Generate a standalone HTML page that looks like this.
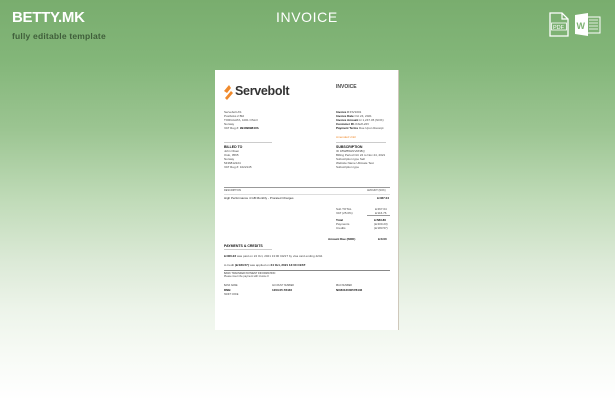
<!DOCTYPE html>
<html><head><meta charset="utf-8"><style>
*{margin:0;padding:0;box-sizing:border-box}
body{width:615px;height:400px;overflow:hidden;font-family:"Liberation Sans",sans-serif;position:relative;
background:linear-gradient(to bottom,#79ad6e 0px,#83b679 60px,#9cc592 130px,#c0dbb8 200px,#dbe9d6 260px,#edf4ea 310px,#f6faf4 350px,#fff 400px);}
.a{position:absolute}
.paper{position:absolute;left:215px;top:70px;width:184px;height:260px;background:#fff;border-right:1px solid #cfc8bb;overflow:hidden;color:#333}
.t{position:absolute;font-size:3px;line-height:4px;color:#444;white-space:nowrap}
.b{font-weight:bold;color:#111}
.ln{position:absolute;height:1px;background:#bbb}
</style></head><body>
<div class="a" style="left:12px;top:9px;font-size:15px;font-weight:900;color:#fff;letter-spacing:-0.3px">BETTY.MK</div>
<div class="a" style="left:12px;top:31px;font-size:8.5px;font-weight:bold;color:#3f5e3a;letter-spacing:0.2px">fully editable template</div>
<div class="a" style="left:276px;top:9px;font-size:14px;color:#fff;letter-spacing:0.6px">INVOICE</div>
<svg class="a" style="left:548px;top:11px" width="54" height="27" viewBox="0 0 54 27">
<path d="M2 2h12l6 6v17H2z" fill="none" stroke="#fff" stroke-width="1.3"/>
<path d="M14 2v6h6" fill="none" stroke="#fff" stroke-width="1.2"/>
<rect x="3.5" y="12" width="15" height="7" fill="none" stroke="#fff" stroke-width="0.8"/>
<text x="5" y="18" font-size="5.5" fill="#fff" font-family="Liberation Sans">PDF</text>
<rect x="30" y="6" width="22" height="16" fill="none" stroke="#fff" stroke-width="1"/>
<path d="M41 9h9M41 12h9M41 15h9M41 18h9" stroke="#fff" stroke-width="0.8"/>
<path d="M27 4l13-2v23l-13-2z" fill="#fff"/>
<text x="28.5" y="18" font-size="9" font-weight="bold" fill="#7fb374" font-family="Liberation Sans">W</text>
</svg>
<div class="paper">
<svg class="a" style="left:8px;top:15px" width="10" height="16" viewBox="0 0 10 16"><path d="M6 0L1 6l3 2 4-5zM8 6L2 13l2 2 6-7z" fill="#f08a2c"/></svg>
<div class="a" style="left:20px;top:14px;font-size:12.5px;font-weight:bold;color:#333;letter-spacing:-0.3px">Servebolt</div>
<div class="a" style="left:121px;top:14px;font-size:5px;font-weight:bold;color:#444">INVOICE</div>
<div class="t" style="left:9px;top:40px">Servebolt AS<br>Postboks 2 Bld<br>TORGGATA, 1001 OSLO<br>Norway<br>VAT Reg #: <b class="b">994098984VA</b></div>
<div class="t" style="left:121px;top:40px"><b class="b">Invoice #</b> INV1001<br><b class="b">Invoice Date</b> Oct 24, 2021<br><b class="b">Invoice Amount</b> kr 1,247.45 (NOK)<br><b class="b">Customer ID</b> cbbu8-22V<br><b class="b">Payment Terms</b> Due Upon Receipt</div>
<div class="t" style="left:121px;top:65px;color:#f08a2c">Amended Until</div>
<div class="ln" style="left:9px;top:72px;width:48px;background:#ccc"></div>
<div class="ln" style="left:121px;top:72px;width:50px;background:#ccc"></div>
<div class="t b" style="left:9px;top:75px;font-size:3.5px">BILLED TO</div>
<div class="t" style="left:9px;top:79px">John Olsen<br>Oslo, 0565<br>Norway<br>5436812224<br>VAT Reg #: 1022145</div>
<div class="t b" style="left:121px;top:75px;font-size:3.5px">SUBSCRIPTION</div>
<div class="t" style="left:121px;top:79px">ID 1BWB5HNVRN8Q<br>Billing Period Oct 24 to Nov 24, 2021<br>Subscription type Sell<br>Website Name Ultimate Test<br>Subscription type</div>
<div class="ln" style="left:9px;top:117px;width:166px;background:#999"></div>
<div class="t" style="left:9px;top:119px;font-size:2.5px">DESCRIPTION</div>
<div class="t" style="left:152px;top:119px;font-size:2.5px">AMOUNT (NOK)</div>
<div class="ln" style="left:9px;top:124px;width:166px;background:#ddd"></div>
<div class="t" style="left:9px;top:126px;color:#222">High Performance 4 GB Monthly - Prorated Charges</div>
<div class="t b" style="left:162px;top:126px">kr467.04</div>
<div class="t" style="left:121px;top:137px">Sub TOTAL<br>VAT (25.0%)</div>
<div class="t" style="left:160px;top:137px">kr467.04<br>kr116.76</div>
<div class="ln" style="left:152px;top:145px;width:23px;background:#999"></div>
<div class="t" style="left:121px;top:148px"><b class="b">Total</b><br>Payments<br>Credits</div>
<div class="t" style="left:159px;top:148px"><b class="b">kr583.80</b><br>(kr400.23)<br>(kr183.57)</div>
<div class="t b" style="left:113px;top:167px">Amount Due (NOK)</div>
<div class="t b" style="left:163px;top:167px">kr0.00</div>
<div class="t b" style="left:9px;top:174px;font-size:3.5px">PAYMENTS &amp; CREDITS</div>
<div class="ln" style="left:9px;top:179px;width:48px;background:#ccc"></div>
<div class="t" style="left:9px;top:184px"><b class="b">kr400.23</b> was paid on 24 Oct, 2021 13:00 CEST by visa card ending 4242.</div>
<div class="t" style="left:9px;top:193px">A credit <b class="b">(kr183.57)</b> was applied on <b class="b">24 Oct, 2021 13:00 CEST</b>.</div>
<div class="ln" style="left:9px;top:200px;width:166px;background:#888"></div>
<div class="t" style="left:9px;top:202px;font-size:2.5px;color:#333">BANK TRANSFER PAYMENT INFORMATION</div>
<div class="t" style="left:9px;top:205px;font-size:2.5px">Please insert the payment with invoice #</div>
<div class="t" style="left:9px;top:214px;font-size:2.3px">BANK NAME<br><b class="b" style="font-size:3px">DNB</b><br>SWIFT CODE</div>
<div class="t" style="left:57px;top:214px;font-size:2.3px">ACCOUNT NUMBER<br><b class="b" style="font-size:3px">1203.05.78446</b></div>
<div class="t" style="left:121px;top:214px;font-size:2.3px">IBAN NUMBER<br><b class="b" style="font-size:3px">NO8312030578446</b></div>
</div>
</body></html>
